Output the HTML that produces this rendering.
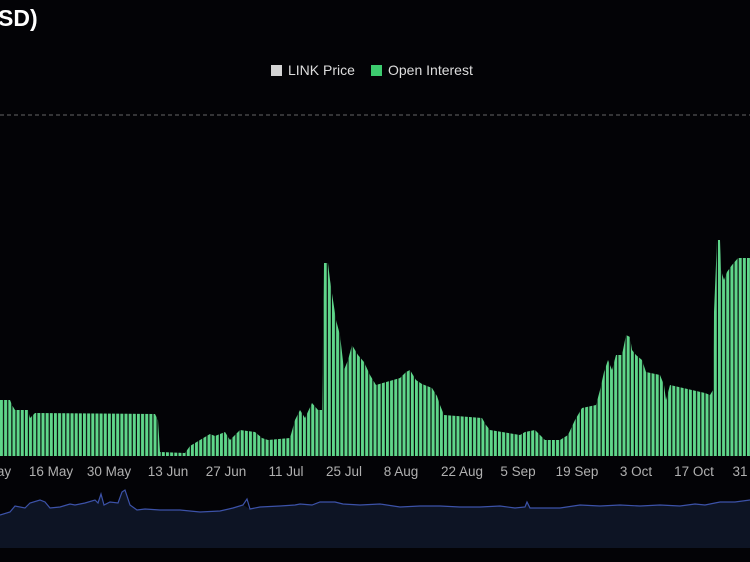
<!DOCTYPE html>
<html><head><meta charset="utf-8"><style>
html,body{margin:0;padding:0;background:#030306;width:750px;height:562px;overflow:hidden;font-family:"Liberation Sans",sans-serif}
.t{position:absolute;left:-2px;top:5px;color:#fff;font-weight:bold;font-size:23px}
.lg{position:absolute;top:62px;font-size:14px;color:#ddd}
.sq{display:inline-block;width:11px;height:11px;vertical-align:-1px;margin-right:6px}
.ax{position:absolute;top:464px;font-size:13.5px;color:#b0b0b0;white-space:nowrap;transform:translateX(-50%)}
</style></head><body>
<div class="t">SD)</div>
<div class="lg" style="left:271px"><span class="sq" style="background:#d4d4d4"></span>LINK Price</div>
<div class="lg" style="left:371px"><span class="sq" style="background:#3ccb6e"></span>Open Interest</div>
<svg width="750" height="562" style="position:absolute;left:0;top:0">
<defs><pattern id="p" width="4.15" height="10" patternUnits="userSpaceOnUse"><rect x="0" y="0" width="3" height="10" fill="#5fd68a"/></pattern></defs>
<line x1="0" y1="115" x2="750" y2="115" stroke="#666" stroke-dasharray="4,3" stroke-width="1"/>
<polygon fill="url(#p)" points="0,456 0,400 10,400 12,405 15,410 28,410 30,418 35,413 155,414 158,420 160,452 185,453 190,446 200,440 210,434 215,436 225,432 230,440 240,430 255,432 262,438 268,440 290,438 295,420 300,410 305,418 312,403 318,410 322,410 324,263 328,263 330,280 333,300 336,320 340,335 344,370 348,360 352,345 358,355 364,362 370,375 376,385 400,378 406,372 410,370 416,380 422,384 432,388 437,396 440,405 444,415 482,418 486,425 490,430 520,435 525,432 535,430 545,440 560,440 568,435 575,420 582,408 596,405 600,390 604,372 608,360 612,370 616,355 622,355 626,335 630,337 632,350 636,355 642,360 646,372 660,375 664,385 666,400 670,385 705,393 710,395 713,390 714,312 717,240 720,240 721,270 724,280 727,272 732,265 738,258 750,258 750,456"/>
<polygon fill="#0d1424" points="0,520 0,515 10,512 15,506 25,508 30,503 40,500 45,502 50,508 60,507 70,504 75,505 85,503 95,500 98,503 101,494 104,505 110,502 118,503 122,492 125,490 130,505 137,510 145,509 160,510 180,510 200,512 220,511 233,508 243,505 250,509 260,507 280,506 295,505 300,504 312,505 320,502 335,502 343,504 360,505 380,504 400,507 420,506 440,506 460,507 480,507 500,506 515,508 525,507 527,502 530,508 560,508 580,505 600,506 620,505 640,506 660,505 680,506 695,504 705,505 720,502 735,502 750,500 750,548 0,548"/>
<polyline fill="none" stroke="#3c52a8" stroke-width="1.2" points="0,515 10,512 15,506 25,508 30,503 40,500 45,502 50,508 60,507 70,504 75,505 85,503 95,500 98,503 101,494 104,505 110,502 118,503 122,492 125,490 130,505 137,510 145,509 160,510 180,510 200,512 220,511 233,508 243,505 247,499 250,509 260,507 280,506 295,505 300,504 312,505 320,502 335,502 343,504 360,505 380,504 400,507 420,506 440,506 460,507 480,507 500,506 515,508 525,507 527,502 530,508 560,508 580,505 600,506 620,505 640,506 660,505 680,506 695,504 705,505 720,502 735,502 750,500"/>
</svg>
<div class="ax" style="left:4px">ay</div>
<div class="ax" style="left:51px">16 May</div>
<div class="ax" style="left:109px">30 May</div>
<div class="ax" style="left:168px">13 Jun</div>
<div class="ax" style="left:226px">27 Jun</div>
<div class="ax" style="left:286px">11 Jul</div>
<div class="ax" style="left:344px">25 Jul</div>
<div class="ax" style="left:401px">8 Aug</div>
<div class="ax" style="left:462px">22 Aug</div>
<div class="ax" style="left:518px">5 Sep</div>
<div class="ax" style="left:577px">19 Sep</div>
<div class="ax" style="left:636px">3 Oct</div>
<div class="ax" style="left:694px">17 Oct</div>
<div class="ax" style="left:740px">31</div>
</body></html>
